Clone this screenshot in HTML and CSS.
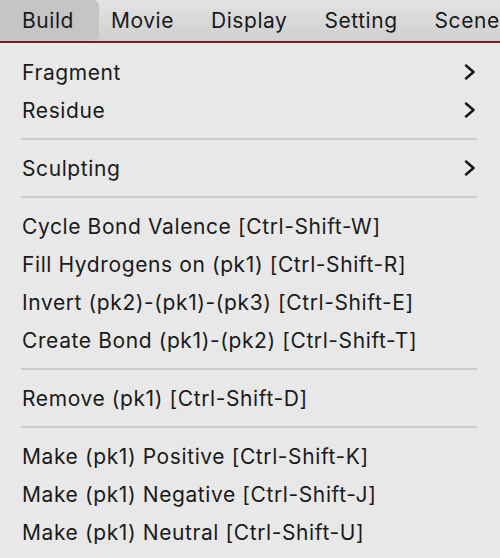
FILE: index.html
```html
<!DOCTYPE html>
<html>
<head>
<meta charset="utf-8">
<link rel="stylesheet" href="styles.css">
</head>
<body>
<div class="menubar">
  <span class="mitem active">Build</span>
  <span class="mitem">Movie</span>
  <span class="mitem">Display</span>
  <span class="mitem">Setting</span>
  <span class="mitem">Scene</span>
</div>
<div class="menu">
  <div class="row"><span>Fragment</span><svg class="chev" width="12" height="16" viewBox="0 0 12 16"><polyline points="2,1.5 9.5,8 2,14.5" /></svg></div>
  <div class="row"><span>Residue</span><svg class="chev" width="12" height="16" viewBox="0 0 12 16"><polyline points="2,1.5 9.5,8 2,14.5" /></svg></div>
  <div class="sep"></div>
  <div class="row"><span>Sculpting</span><svg class="chev" width="12" height="16" viewBox="0 0 12 16"><polyline points="2,1.5 9.5,8 2,14.5" /></svg></div>
  <div class="sep"></div>
  <div class="row"><span>Cycle Bond Valence [Ctrl-Shift-W]</span></div>
  <div class="row"><span>Fill Hydrogens on (pk1) [Ctrl-Shift-R]</span></div>
  <div class="row"><span>Invert (pk2)-(pk1)-(pk3) [Ctrl-Shift-E]</span></div>
  <div class="row"><span>Create Bond (pk1)-(pk2) [Ctrl-Shift-T]</span></div>
  <div class="sep"></div>
  <div class="row"><span>Remove (pk1) [Ctrl-Shift-D]</span></div>
  <div class="sep"></div>
  <div class="row"><span>Make (pk1) Positive [Ctrl-Shift-K]</span></div>
  <div class="row"><span>Make (pk1) Negative [Ctrl-Shift-J]</span></div>
  <div class="row"><span>Make (pk1) Neutral [Ctrl-Shift-U]</span></div>
</div>
</body>
</html>
```
FILE: styles.css
```css
html, body {
  margin: 0;
  padding: 0;
  width: 500px;
  height: 558px;
  overflow: hidden;
  background: #e8e8e8;
  font-family: Inter, "Noto Sans", sans-serif;
  color: #1a1a1a;
}
.menubar {
  height: 41px;
  display: flex;
  align-items: stretch;
  gap: 37px;
  padding-left: 22px;
  background: linear-gradient(#e2e2e2, #d0d0d0);
  border-bottom: 2px solid #7b1f27;
  white-space: nowrap;
  overflow: hidden;
}
.mitem {
  display: flex;
  align-items: center;
  font-size: 21px;
  letter-spacing: 0.55px;
  line-height: 40px;
  height: 40px;
  padding-top: 1px;
  flex: none;
}
.mitem.active {
  background: #c5c5c5;
  border-radius: 0 6px 6px 0;
  margin-left: -22px;
  margin-right: -25px;
  padding: 1px 25px 0 22px;
}
.menu {
  padding-top: 10px;
}
.row {
  height: 38px;
  display: flex;
  align-items: center;
  justify-content: space-between;
  padding: 0 24px 0 22px;
  font-size: 21px;
  letter-spacing: 0.6px;
  white-space: nowrap;
}
.chev polyline {
  fill: none;
  stroke: #151515;
  stroke-width: 2.4;
  stroke-linecap: round;
  stroke-linejoin: round;
}
.sep {
  height: 2px;
  margin: 9px 23px 9px 21px;
  background: #cbcbcb;
}
```
